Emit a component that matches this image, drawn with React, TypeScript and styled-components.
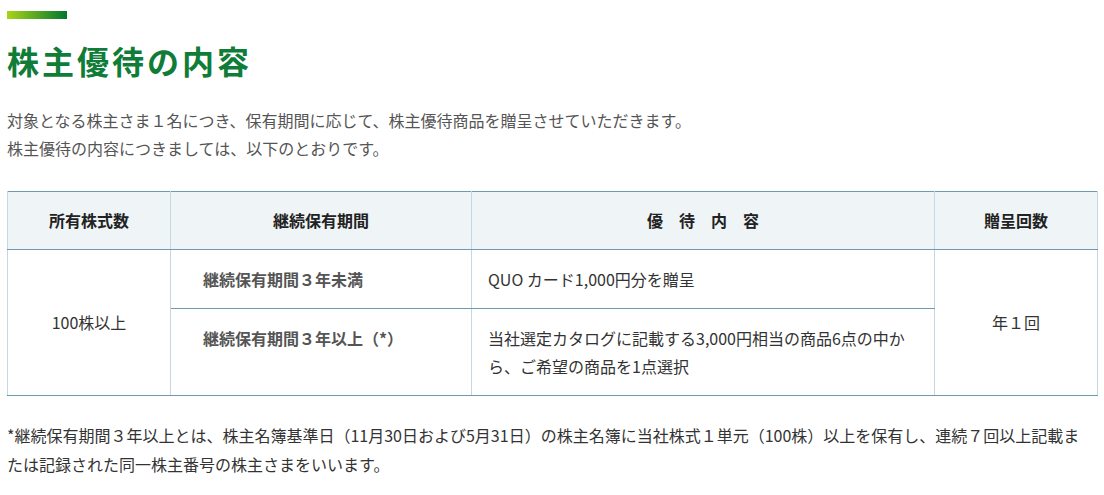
import React from 'react';
import styled, {createGlobalStyle} from "styled-components";

interface IRow {
    period: string;
    content: React.ReactNode;
}

const rows: IRow[] = [
    {period: "継続保有期間３年未満", content: "QUO カード1,000円分を贈呈"},
    {period: "継続保有期間３年以上（*）", content: <>当社選定カタログに記載する3,000円相当の商品6点の中か<br/>ら、ご希望の商品を1点選択</>},
];

const App: React.FC = () => {

    return (
        <Wrapper>
            <GlobalStyle/>

            <Accent/>
            <Title>株主優待の内容</Title>

            <Lead>
                対象となる株主さま１名につき、保有期間に応じて、株主優待商品を贈呈させていただきます。<br/>
                株主優待の内容につきましては、以下のとおりです。
            </Lead>

            <Table>
                <colgroup>
                    <col style={{width: 163}}/>
                    <col style={{width: 301}}/>
                    <col style={{width: 463}}/>
                    <col/>
                </colgroup>
                <thead>
                    <tr>
                        <Th>所有株式数</Th>
                        <Th>継続保有期間</Th>
                        <Th>優　待　内　容</Th>
                        <Th>贈呈回数</Th>
                    </tr>
                </thead>
                <tbody>
                    {rows.map((row, i) => (
                        <tr key={i}>
                            {i === 0 && <CenterCell rowSpan={rows.length}>100株以上</CenterCell>}
                            <PeriodCell>{row.period}</PeriodCell>
                            <ContentCell>{row.content}</ContentCell>
                            {i === 0 && <CenterCell rowSpan={rows.length}>年１回</CenterCell>}
                        </tr>
                    ))}
                </tbody>
            </Table>

            <Note>
                *継続保有期間３年以上とは、株主名簿基準日（11月30日および5月31日）の株主名簿に当社株式１単元（100株）以上を保有し、連続７回以上記載ま<br/>
                たは記録された同一株主番号の株主さまをいいます。
            </Note>

        </Wrapper>
    );

};

export default App;

const GlobalStyle = createGlobalStyle`
    body {
      margin: 0;
      background: #fff;
      font-family: "Noto Sans CJK JP", "Noto Sans", sans-serif;
    }
`;

const Wrapper = styled.div`
    padding: 11px 6px 0 7px;
    width: 1091px;
`;

const Accent = styled.div`
    width: 60px;
    height: 8px;
    background: linear-gradient(to right, #a9d418, #00772f);
`;

const Title = styled.h2`
    margin: 21px 0 0;
    font-size: 32px;
    line-height: 40px;
    font-weight: 700;
    letter-spacing: 3px;
    color: #0f7c38;
`;

const Lead = styled.p`
    margin: 26px 0 0;
    font-size: 16px;
    line-height: 28.4px;
    color: #555;
`;

const Table = styled.table`
    margin-top: 28px;
    width: 100%;
    border-collapse: collapse;
    table-layout: fixed;
    border-top: 1px solid #6f99af;
    border-bottom: 1px solid #6f99af;
    font-size: 16px;
    line-height: 28px;
`;

const Th = styled.th`
    height: 57px;
    padding: 0 16px;
    background: #eff4f7;
    color: #222;
    font-weight: 700;
    text-align: center;
    border-left: 1px solid #c6d7e2;
    border-right: 1px solid #c6d7e2;
    border-bottom: 1px solid #6f99af;
`;

const Td = styled.td`
    padding: 15px 16px;
    border-left: 1px solid #c6d7e2;
    border-right: 1px solid #c6d7e2;
    border-bottom: 1px solid #6f99af;
    vertical-align: top;
`;

const CenterCell = styled(Td)`
    text-align: center;
    vertical-align: middle;
    color: #333;
`;

const PeriodCell = styled(Td)`
    padding-left: 32px;
    font-weight: 700;
    color: #555;
`;

const ContentCell = styled(Td)`
    color: #333;
`;

const Note = styled.p`
    margin: 25px 0 0;
    font-size: 16px;
    line-height: 29px;
    color: #333;
`;
